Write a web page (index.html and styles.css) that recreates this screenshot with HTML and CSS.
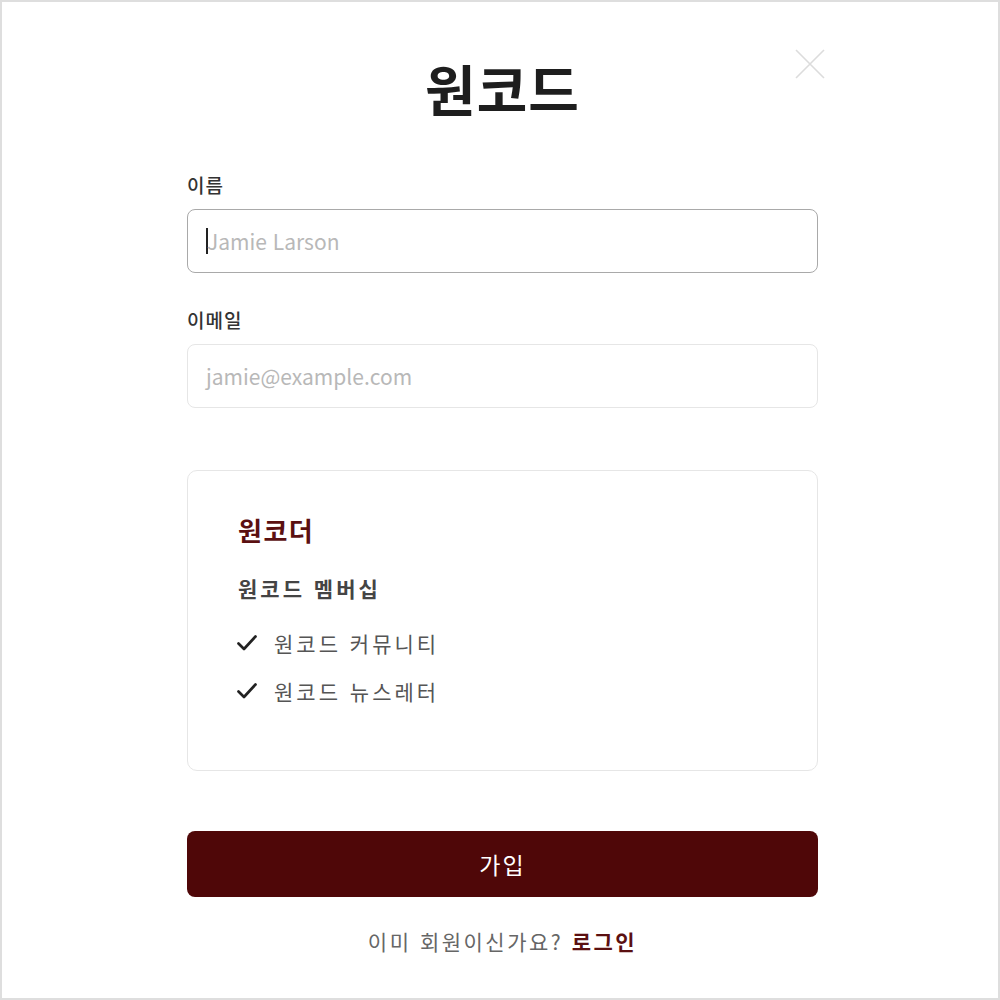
FILE: index.html
```html
<!DOCTYPE html>
<html lang="ko">
<head>
<meta charset="utf-8">
<link rel="stylesheet" href="styles.css">
</head>
<body>
<div class="frame">
  <div class="panel">
    <button class="close" aria-label="닫기">
      <svg width="30" height="30" viewBox="0 0 30 30"><path d="M1 1 L29 29 M29 1 L1 29" stroke="#dcdcdc" stroke-width="1.6" fill="none"/></svg>
    </button>
    <h1 class="title">원코드</h1>
    <div class="field">
      <label class="label">이름</label>
      <div class="input focused"><span class="caret"></span><span class="ph">Jamie Larson</span></div>
    </div>
    <div class="field">
      <label class="label">이메일</label>
      <div class="input"><span class="ph">jamie@example.com</span></div>
    </div>
    <div class="card">
      <div class="card-title">원코더</div>
      <div class="card-sub">원코드 멤버십</div>
      <ul class="list">
        <li><svg class="check" width="22" height="18" viewBox="0 0 22 18"><path d="M2.5 9.5 L8 15 L19.5 2.5" stroke="#222" stroke-width="2.7" fill="none" stroke-linecap="round" stroke-linejoin="round"/></svg>원코드 커뮤니티</li>
        <li><svg class="check" width="22" height="18" viewBox="0 0 22 18"><path d="M2.5 9.5 L8 15 L19.5 2.5" stroke="#222" stroke-width="2.7" fill="none" stroke-linecap="round" stroke-linejoin="round"/></svg>원코드 뉴스레터</li>
      </ul>
    </div>
    <button class="submit">가입</button>
    <p class="footer">이미 회원이신가요? <a class="login">로그인</a></p>
  </div>
</div>
</body>
</html>
```
FILE: styles.css
```css
* { box-sizing: border-box; }
html, body { margin: 0; padding: 0; }
body {
  font-family: "Noto Sans CJK KR", "Noto Sans", sans-serif;
  color: #222;
  background: #fff;
}
.frame {
  width: 1000px;
  height: 1000px;
  border: 2px solid #dedede;
  padding-top: 47px;
}
.panel {
  position: relative;
  width: 631px;
  margin: 0 0 0 185px;
}
.close {
  position: absolute;
  top: 0;
  right: -7px;
  padding: 0;
  border: 0;
  background: none;
  width: 30px;
  height: 30px;
}
.close svg { display: block; }
.title {
  margin: 0;
  text-align: center;
  font-size: 55px;
  line-height: 76px;
  font-weight: 700;
  color: #1e1e1e;
  letter-spacing: 1px;
}
.field { margin-top: 47px; }
.field + .field { margin-top: 34px; }
.label {
  display: block;
  font-size: 19px;
  font-weight: 500;
  color: #333;
  line-height: 26px;
  margin-bottom: 11px;
  letter-spacing: 1px;
}
.input {
  height: 64px;
  border: 1px solid #e6e6e6;
  border-radius: 8px;
  display: flex;
  align-items: center;
  padding-left: 18px;
}
.input.focused { border-color: #a9a9a9; }
.caret {
  width: 2px;
  height: 26px;
  background: #222;
  margin-right: -1px;
}
.ph {
  font-family: "Noto Sans CJK KR", sans-serif;
  font-size: 21px;
  color: #b8b8b8;
}
.card {
  margin-top: 62px;
  height: 301px;
  border: 1px solid #e6e6e6;
  border-radius: 10px;
  padding: 37px 50px;
}
.card-title {
  font-size: 26px;
  font-weight: 700;
  color: #5b1011;
  line-height: 44px;
  letter-spacing: 1.5px;
}
.card-sub {
  margin-top: 19px;
  font-size: 21px;
  font-weight: 700;
  color: #444;
  line-height: 34px;
  letter-spacing: 3px;
}
.list {
  list-style: none;
  margin: 21px 0 0;
  padding: 0;
}
.list li {
  display: flex;
  align-items: center;
  font-size: 21px;
  color: #555;
  line-height: 34px;
  margin-bottom: 14px;
  letter-spacing: 3px;
}
.check { margin-right: 16px; margin-left: -2px; flex: none; }
.submit {
  display: block;
  width: 100%;
  margin-top: 60px;
  height: 66px;
  border: 0;
  border-radius: 8px;
  background: #4f0708;
  color: #fff;
  font-family: inherit;
  font-size: 23px;
  font-weight: 400;
  letter-spacing: 2px;
}
.footer {
  margin: 29px 0 0;
  text-align: center;
  font-size: 21px;
  color: #666;
  line-height: 30px;
  letter-spacing: 2.5px;
}
.login {
  font-weight: 700;
  color: #5b1011;
}
```
